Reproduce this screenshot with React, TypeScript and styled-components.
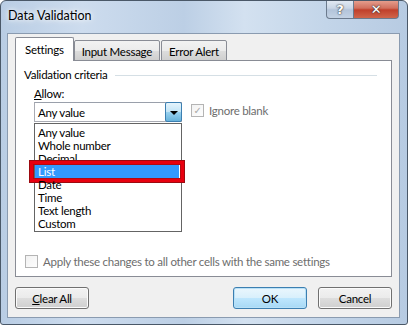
import styled, { createGlobalStyle } from "styled-components";

const GlobalStyle = createGlobalStyle`
  html, body {
    margin: 0;
    padding: 0;
    background: #ffffff;
  }
  body {
    font-family: Lato, "Noto Sans", sans-serif;
    font-size: 11.5px;
    letter-spacing: -0.25px;
    color: #000;
  }
`;

const Window = styled.div`
  width: 408px;
  height: 325px;
  box-sizing: border-box;
  display: flex;
  flex-direction: column;
  border: 1px solid #4a5868;
  border-radius: 6px 6px 3px 3px;
  background: linear-gradient(90deg, #b9cde4 0%, #cddcee 20%, #bccfe5 45%, #d3e1f0 60%, #c3d5e9 80%, #b7cbe2 100%);
  overflow: hidden;
`;

const TitleBar = styled.div`
  height: 32px;
  flex: none;
  display: flex;
  align-items: flex-start;
  justify-content: space-between;
  padding-left: 7px;
`;

const Caption = styled.div`
  margin-top: 7px;
  font-size: 12.5px;
  letter-spacing: 0;
  color: #000;
  text-shadow: 0 0 8px #ffffff, 0 0 4px #ffffff;
`;

const CaptionButtons = styled.div`
  display: flex;
  margin-right: 8px;
  margin-top: -1px;
`;

const CaptionButton = styled.div<{ $close?: boolean }>`
  height: 19px;
  width: ${({ $close }) => ($close ? "45px" : "28px")};
  box-sizing: border-box;
  border: 1px solid #6b7a8d;
  border-top: none;
  border-radius: ${({ $close }) => ($close ? "0 0 4px 0" : "0 0 0 4px")};
  border-left: ${({ $close }) => ($close ? "none" : "1px solid #6b7a8d")};
  background: ${({ $close }) =>
    $close
      ? "linear-gradient(180deg, #e7a393 0%, #d1705e 45%, #c0402b 55%, #d0654a 100%)"
      : "linear-gradient(180deg, #e4ebf4 0%, #c9d6e6 45%, #b3c4da 55%, #c3d2e4 100%)"};
  display: flex;
  align-items: center;
  justify-content: center;
  color: #fff;
  font-weight: bold;
  font-family: "DejaVu Sans", sans-serif;
  font-size: 13px;
  text-shadow: 0 0 2px #333, 0 0 1px #333;
`;

const Client = styled.div`
  flex: 1;
  margin: 0 7px 7px 6px;
  border: 1px solid #8a9bb0;
  background: #f0f0f0;
  display: flex;
  flex-direction: column;
  padding: 3px 7px 8px 7px;
`;

const TabStrip = styled.div`
  display: flex;
  align-items: flex-end;
  height: 24px;
  position: relative;
  z-index: 1;
  margin-bottom: -1px;
`;

const Tab = styled.div<{ $active?: boolean }>`
  box-sizing: border-box;
  height: ${({ $active }) => ($active ? "24px" : "21px")};
  padding: ${({ $active }) => ($active ? "0 9px" : "0 7px")};
  margin-right: ${({ $active }) => ($active ? "0" : "1px")};
  border: 1px solid #898c95;
  border-bottom: ${({ $active }) => ($active ? "none" : "1px solid #898c95")};
  border-radius: 2px 2px 0 0;
  background: ${({ $active }) =>
    $active ? "#ffffff" : "linear-gradient(180deg, #f2f2f2 0%, #ebebeb 50%, #dddddd 51%, #cfcfcf 100%)"};
  display: flex;
  align-items: center;
  padding-top: ${({ $active }) => ($active ? "0" : "1px")};
`;

const Panel = styled.div`
  height: 217px;
  box-sizing: border-box;
  border: 1px solid #898c95;
  background: #ffffff;
  display: flex;
  flex-direction: column;
  padding: 7px 8px 8px 8px;
`;

const GroupHeader = styled.div`
  display: flex;
  align-items: center;
  gap: 7px;
  color: #000;
  &::after {
    content: "";
    flex: 1;
    height: 1px;
    background: #d5dfe5;
    margin-right: 6px;
    margin-top: 1px;
  }
`;

const CriteriaRow = styled.div`
  display: flex;
  padding-left: 10px;
  margin-top: 5px;
  gap: 9px;
`;

const AllowColumn = styled.div`
  position: relative;
  display: flex;
  flex-direction: column;
  width: 148px;
`;

const Label = styled.div`
  height: 15px;
  line-height: 15px;
  margin-bottom: 1px;
  & u {
    text-decoration: underline;
    text-underline-offset: 1px;
  }
`;

const Combo = styled.div`
  box-sizing: border-box;
  height: 20px;
  border: 1px solid #a9abb3;
  border-top-color: #9aa0ab;
  background: #fff;
  display: flex;
  align-items: center;
  padding-left: 3px;
  position: relative;
`;

const ComboText = styled.div`
  flex: 1;
`;

const ComboButton = styled.div`
  width: 17px;
  height: 20px;
  box-sizing: border-box;
  margin: -1px -1px -1px 0;
  border: 1px solid #3c7fb1;
  border-radius: 2px;
  background: linear-gradient(180deg, #e5f4fc 0%, #c4e5f6 48%, #98d1ef 52%, #68b3db 100%);
  display: flex;
  align-items: center;
  justify-content: center;
  &::after {
    content: "";
    border-left: 4px solid transparent;
    border-right: 4px solid transparent;
    border-top: 4px solid #000;
    margin-top: 1px;
  }
`;

const DropList = styled.div`
  position: absolute;
  top: 37px;
  left: 0;
  width: 148px;
  box-sizing: border-box;
  border: 1px solid #646464;
  background: #fff;
  padding: 2px 0 1px 0;
  z-index: 2;
`;

const ListItem = styled.div<{ $selected?: boolean }>`
  height: 13px;
  line-height: 13px;
  padding-left: 3px;
  margin: 0 2px 0 0;
  background: ${({ $selected }) => ($selected ? "#3399ff" : "transparent")};
  color: ${({ $selected }) => ($selected ? "#ffffff" : "#000000")};
  position: relative;
  ${({ $selected }) =>
    $selected &&
    `
    &::after {
      content: "";
      position: absolute;
      left: -5px;
      top: -4px;
      right: -5px;
      bottom: -4px;
      border: 3px solid #e8000f;
      box-shadow: 0 0 0 1px #9c0a10, inset 0 0 0 1px #b30a12;
    }
  `}
`;

const CheckRow = styled.div<{ $disabled?: boolean }>`
  display: flex;
  align-items: center;
  gap: 5px;
  color: ${({ $disabled }) => ($disabled ? "#6d6d6d" : "#000")};
`;

const CheckBox = styled.div`
  width: 13px;
  height: 13px;
  box-sizing: border-box;
  border: 1px solid #b4b4b4;
  background: linear-gradient(135deg, #f2f2f2 0%, #fdfdfd 100%);
  display: flex;
  align-items: center;
  justify-content: center;
  color: #a8a8a8;
  font-family: "DejaVu Sans", sans-serif;
  font-size: 10px;
  line-height: 11px;
`;

const IgnoreBlank = styled(CheckRow)`
  margin-top: 18px;
  align-self: flex-start;
  height: 13px;
`;

const ApplyRow = styled(CheckRow)`
  margin-top: auto;
  margin-left: 1px;
`;

const ButtonRow = styled.div`
  display: flex;
  align-items: center;
  margin-top: 10px;
  gap: 11px;
`;

const Button = styled.button<{ $default?: boolean }>`
  width: 74px;
  height: 22px;
  box-sizing: border-box;
  font-family: inherit;
  font-size: 11.5px;
  letter-spacing: -0.25px;
  color: #000;
  border: 1px solid ${({ $default }) => ($default ? "#3c7fb1" : "#707070")};
  border-radius: 3px;
  background: ${({ $default }) =>
    $default
      ? "linear-gradient(180deg, #eaf6fd 0%, #d9f0fc 48%, #bee6fd 52%, #a7d9f5 100%)"
      : "linear-gradient(180deg, #f2f2f2 0%, #ebebeb 48%, #dddddd 52%, #cfcfcf 100%)"};
  box-shadow: inset 0 0 0 1px ${({ $default }) => ($default ? "#b9e1f7" : "#fbfbfb")};
  padding: 0;
  & u {
    text-underline-offset: 1px;
  }
`;

const Spacer = styled.div`
  flex: 1;
`;

const items = ["Any value", "Whole number", "Decimal", "List", "Date", "Time", "Text length", "Custom"];

export default function App() {
  return (
    <>
      <GlobalStyle />
      <Window>
        <TitleBar>
          <Caption>Data Validation</Caption>
          <CaptionButtons>
            <CaptionButton>?</CaptionButton>
            <CaptionButton $close>✕</CaptionButton>
          </CaptionButtons>
        </TitleBar>
        <Client>
          <TabStrip>
            <Tab $active>Settings</Tab>
            <Tab>Input Message</Tab>
            <Tab>Error Alert</Tab>
          </TabStrip>
          <Panel>
            <GroupHeader>Validation criteria</GroupHeader>
            <CriteriaRow>
              <AllowColumn>
                <Label>
                  <u>A</u>llow:
                </Label>
                <Combo>
                  <ComboText>Any value</ComboText>
                  <ComboButton />
                </Combo>
                <DropList>
                  {items.map((item) => (
                    <ListItem key={item} $selected={item === "List"}>
                      {item}
                    </ListItem>
                  ))}
                </DropList>
              </AllowColumn>
              <IgnoreBlank $disabled>
                <CheckBox>✓</CheckBox>
                Ignore blank
              </IgnoreBlank>
            </CriteriaRow>
            <ApplyRow $disabled>
              <CheckBox />
              Apply these changes to all other cells with the same settings
            </ApplyRow>
          </Panel>
          <ButtonRow>
            <Button>
              <u>C</u>lear All
            </Button>
            <Spacer />
            <Button $default>OK</Button>
            <Button>Cancel</Button>
          </ButtonRow>
        </Client>
      </Window>
    </>
  );
}
